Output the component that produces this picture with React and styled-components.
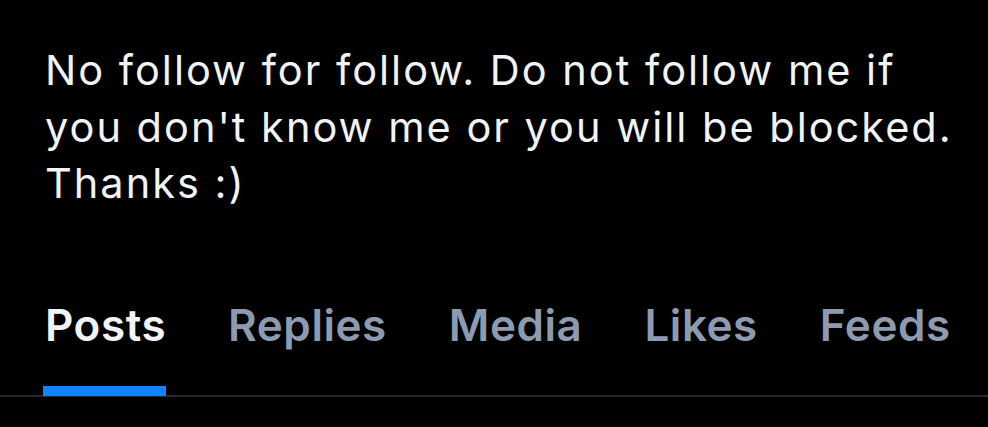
import styled, { createGlobalStyle } from "styled-components";

const GlobalStyle = createGlobalStyle`
  html,
  body {
    margin: 0;
    padding: 0;
    background: #000;
  }
  body {
    font-family: Inter, "Noto Sans", sans-serif;
    -webkit-font-smoothing: antialiased;
  }
`;

const Wrapper = styled.section`
  width: 988px;
  height: 427px;
  background: #000;
  overflow: hidden;
`;
const Bio = styled.p`
  margin: 0;
  padding: 42px 20px 0 45px;
  color: #f1f3f5;
  font-size: 41.5px;
  line-height: 56.7px;
  letter-spacing: 2px;
  font-weight: 400;
  white-space: nowrap;
`;
const Tabs = styled.nav`
  display: flex;
  gap: 62px;
  padding: 0 45px;
  margin-top: 86px;
  border-bottom: 2px solid #24262d;
`;
const Tab = styled.div`
  position: relative;
  padding-bottom: 43px;
  font-size: 44px;
  line-height: 54px;
  font-weight: 600;
  letter-spacing: 0.55px;
  color: ${(p) => (p.$active ? "#f1f3f5" : "#8d9bb0")};

  &::after {
    content: "";
    display: ${(p) => (p.$active ? "block" : "none")};
    position: absolute;
    left: -2px;
    right: 0;
    bottom: -1px;
    height: 10px;
    background: #1083fe;
  }
`;

const tabs = ["Posts", "Replies", "Media", "Likes", "Feeds"];

function App() {
  return (
    <Wrapper>
      <GlobalStyle />
      <Bio>
        No follow for follow. Do not follow me if
        <br />
        you don't know me or you will be blocked.
        <br />
        Thanks :)
      </Bio>
      <Tabs>
        {tabs.map((t, i) => (
          <Tab key={t} $active={i === 0}>
            {t}
          </Tab>
        ))}
      </Tabs>
    </Wrapper>
  );
}

export default App;
